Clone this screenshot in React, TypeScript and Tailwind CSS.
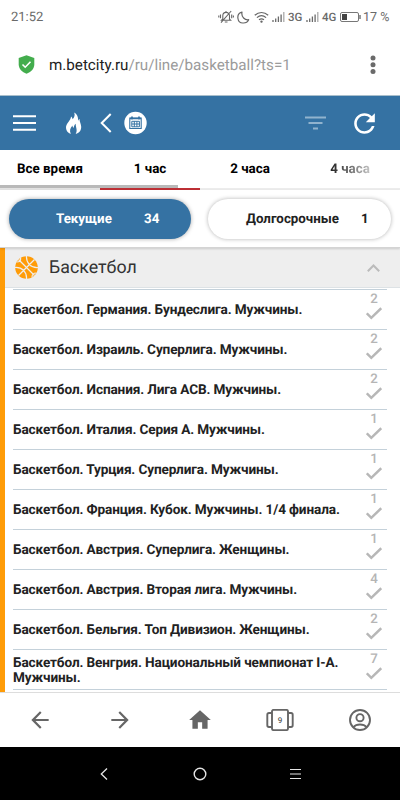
const tabs = [
  { label: "Все время", className: "text-black" },
  { label: "1 час", className: "text-black" },
  { label: "2 часа", className: "text-black" },
  {
    label: "4 часа",
    className: "bg-linear-to-r from-[#222] to-[#c4c4c4] bg-clip-text text-transparent",
  },
];

const leagues = [
  { name: "Баскетбол. Германия. Бундеслига. Мужчины.", count: 2 },
  { name: "Баскетбол. Израиль. Суперлига. Мужчины.", count: 2 },
  { name: "Баскетбол. Испания. Лига АСВ. Мужчины.", count: 2 },
  { name: "Баскетбол. Италия. Серия А. Мужчины.", count: 1 },
  { name: "Баскетбол. Турция. Суперлига. Мужчины.", count: 1 },
  { name: "Баскетбол. Франция. Кубок. Мужчины. 1/4 финала.", count: 1 },
  { name: "Баскетбол. Австрия. Суперлига. Женщины.", count: 1 },
  { name: "Баскетбол. Австрия. Вторая лига. Мужчины.", count: 4 },
  { name: "Баскетбол. Бельгия. Топ Дивизион. Женщины.", count: 2 },
  { name: "Баскетбол. Венгрия. Национальный чемпионат I-A. Мужчины.", count: 7 },
];

function Signal() {
  return (
    <svg className="h-3 w-[13px]" viewBox="0 0 13 12" stroke="#6a6a6a" strokeWidth="1.3">
      <path d="M1 11V9M3.7 11V7.5M6.4 11V5.5M9.1 11V3.5" />
      <path d="M11.8 11V1" stroke="#aaa" />
    </svg>
  );
}

function StatusBar() {
  return (
    <div className="flex h-[34px] items-center pr-[11px] pl-[11px] text-[#6a6a6a]">
      <span className="pt-0.5 text-[13px]">21:52</span>
      <svg className="ml-auto h-[14px] w-4" viewBox="0 0 16 14" fill="none" stroke="#666" strokeWidth="1.1">
        <path d="M3.5 10.3h9.2L11.5 9V5.8C11.5 3.8 10 2.4 8.1 2.4S4.8 3.8 4.8 5.8V9ZM6.8 12h2.7M8 1v1.4M13.2 1 3 12.6M2.5 4.5v3.8M.8 5.5v2M13.7 4.5v3.8M15.4 5.5v2" />
      </svg>
      <svg className="ml-[3px] h-[13px] w-[13px]" viewBox="0 0 13 13" fill="none" stroke="#666" strokeWidth="1.2">
        <path d="M5 1.2C1.8 2 .6 4.7.9 7.2c.4 3 2.7 5 5.5 4.8 2.3-.1 4.4-1.3 5.3-3.3C8 9.3 4 6 5 1.2Z" strokeLinejoin="round" />
      </svg>
      <svg className="ml-1 h-3 w-[15px]" viewBox="0 0 15 12" fill="none" stroke="#666" strokeWidth="1.2">
        <path d="M.8 4.2c4-3.6 9.4-3.6 13.4 0M2.9 6.6c2.8-2.5 6.4-2.5 9.2 0M5 8.8c1.6-1.3 3.4-1.3 5 0" />
        <circle cx="7.5" cy="10.6" r=".6" fill="#666" />
      </svg>
      <span className="ml-[3px] flex"><Signal /></span>
      <span className="ml-[3px] w-[15px] pt-0.5 text-[11.5px] font-medium">3G</span>
      <span className="ml-[3px] flex"><Signal /></span>
      <span className="ml-[3px] w-[15px] pt-0.5 text-[11.5px] font-medium">4G</span>
      <svg className="ml-[3px] h-[10px] w-[22px]" viewBox="0 0 22 10" fill="none" stroke="#777">
        <rect x=".5" y=".5" width="18" height="9" rx="1.5" />
        <path d="M2 2h5v6H2z" fill="#444" stroke="none" />
        <path d="M20 3v4" strokeWidth="1.5" />
      </svg>
      <span className="ml-px w-[26px] pt-0.5 text-[12.5px] whitespace-nowrap">17 %</span>
    </div>
  );
}

function AddressBar() {
  return (
    <div className="flex h-[62px] items-center border-b border-[#a9bfcc] pl-[18px]">
      <svg className="h-[19px] w-[17px]" viewBox="0 0 17 19">
        <path d="M8.5.3 16.3 3v6.2c0 4.6-3.5 8-7.8 9.5C4.2 17.2.7 13.8.7 9.2V3Z" fill="#43ad4d" />
        <path d="m4.5 9.5 2.7 2.7 5.3-5.4" fill="none" stroke="#fff" strokeWidth="1.6" />
      </svg>
      <div className="ml-3.5 pt-0.5 text-[15.2px] whitespace-nowrap text-[#9b9b9b]">
        <span className="text-[#222]">m.betcity.ru</span>/ru/line/basketball?ts=1
      </div>
      <svg className="mr-6 ml-auto h-5 w-[6px]" viewBox="0 0 6 20" fill="#6a6a6a">
        <circle cx="3" cy="3" r="2.5" />
        <circle cx="3" cy="9.7" r="2.5" />
        <circle cx="3" cy="16.4" r="2.5" />
      </svg>
    </div>
  );
}

function Header() {
  return (
    <header className="flex h-[54px] items-center bg-[#3572a3] pl-[13px]">
      <svg className="h-[18px] w-[23px]" viewBox="0 0 23 18" stroke="#fff" strokeWidth="2">
        <path d="M0 2.2h23M0 9h23M0 15.7h23" />
      </svg>
      <svg className="ml-[29px] h-[23px] w-[17px]" viewBox="0 0 17 23" fill="#fff">
        <path d="M9.2.5c1 2.7.3 4.6-1.6 6.8-.3-1.4-.8-2.1-1.6-2.7.2 3.6-5.3 7-5 11.5.2 3.1 2 5 4.8 6-1.5-3.6-.7-6 1.7-8.6 0 1.2.4 1.9 1.2 2.3.2-1.7.8-3 2-4.1-.2 3.7 2.3 6 0 10.4 3.5-1.2 5.6-3.5 5.5-7.3-.1-3-1.8-4.7-1.6-7.7-1 .5-1.5 1.4-1.6 2.7C13.5 6 12.6 2.5 9.2.5Z" />
      </svg>
      <svg className="ml-[18px] h-5 w-3" viewBox="0 0 12 20" fill="none" stroke="#fff" strokeWidth="2">
        <path d="m10.7 1-9 9 9 9" />
      </svg>
      <svg className="ml-[11px] h-6 w-6" viewBox="0 0 24 24" fill="none" stroke="#3572a3">
        <circle cx="12.5" cy="12" r="11.2" fill="#fff" stroke="none" />
        <path d="M6.8 7h11.4v10.5H6.8z" strokeWidth="1.1" />
        <path d="M7 7.5h11M9 5.5v3M16 5.5v3" strokeWidth="1.7" />
        <path d="M8.8 10.3h7.6v5.5H8.8zM8.8 13h7.6M11.3 10.3v5.5M13.9 10.3v5.5" />
      </svg>
      <svg className="ml-auto h-4 w-[21px]" viewBox="0 0 21 16" stroke="#91b3ce" strokeWidth="2">
        <path d="M0 2.5h21M3.5 8h14M8 13.5h5" />
      </svg>
      <svg className="mr-5 ml-[23px] h-[31px] w-[31px]" viewBox="0 0 24 24" fill="#fff">
        <path d="M17.65 6.35C16.2 4.9 14.21 4 12 4c-4.42 0-7.99 3.58-7.99 8s3.57 8 7.99 8c3.73 0 6.84-2.55 7.73-6h-2.08c-.82 2.33-3.04 4-5.65 4-3.31 0-6-2.69-6-6s2.69-6 6-6c1.66 0 3.14.69 4.22 1.78L13 11h7V4l-2.35 2.35z" />
      </svg>
    </header>
  );
}

function Tabs() {
  return (
    <div className="h-10">
      <div className="grid h-[35px] grid-cols-4 items-center pt-1.5 text-center text-[13.4px] font-bold">
        {tabs.map((tab) => (
          <div key={tab.label}>
            <span className={tab.className}>{tab.label}</span>
          </div>
        ))}
      </div>
      <div className="h-[3px] w-[178px] bg-[#b9b9b9]" />
      <div className="flex h-0.5">
        <div className="w-[100px] bg-[#e2e2e2]" />
        <div className="w-[100px] bg-[#bd2f35]" />
        <div className="flex-1 bg-[#ececec]" />
      </div>
    </div>
  );
}

function Filters() {
  return (
    <div className="relative flex h-[58px] gap-[17px] border-b border-[#d4d4d4] pt-[9px] pl-[9px] text-[13.33px] font-bold shadow-[0_1px_2px_rgba(0,0,0,0.15)]">
      <div className="flex h-[40px] w-[182px] items-center rounded-full bg-[#3572a3] pt-0.5 pl-[47px] text-white shadow-[0_0_4px_rgba(0,0,0,0.35)]">
        <span className="w-[88px]">Текущие</span>34
      </div>
      <div className="flex h-[40px] w-[183px] items-center rounded-full bg-white pt-0.5 pl-[38px] text-[#222] shadow-[0_0_4px_rgba(0,0,0,0.3)]">
        <span className="w-[115px]">Долгосрочные</span>1
      </div>
    </div>
  );
}

function Ball() {
  return (
    <svg className="h-[23px] w-[23px]" viewBox="0 0 23 23" fill="none" stroke="#eee" strokeWidth="1.2">
      <circle cx="11.5" cy="11.5" r="11.3" fill="#ff9c08" stroke="none" />
      <path d="m3.5 3.5 16 16M19.5 3.5l-16 16M11.5 0c-.5 7 4.5 12 11.5 11.500M0 11.500c7-.5 12 4.500 11.500 11.500M5.500 1.500C6 5 5 6 1.500 6M21.500 17c-3.500 0-4.500 1-4.500 4.500" />
    </svg>
  );
}

function Leagues() {
  return (
    <main className="h-[444px] overflow-hidden border-l-[5px] border-[#ff9c08]">
      <div className="flex h-10 items-center border-b border-[#dde2e5] bg-[#eee] pl-2.5">
        <Ball />
        <h1 className="mt-0.5 ml-[11px] text-[17.8px] text-[#333]">Баскетбол</h1>
        <svg className="mr-5 ml-auto h-2 w-[13px]" viewBox="0 0 13 8" fill="none" stroke="#bbb" strokeWidth="2">
          <path d="m.8 7.3 5.7-5.8 5.7 5.8" />
        </svg>
      </div>
      <ul className="mr-[13px] ml-2 border-b border-[#c4d1da] pt-px">
        {leagues.map((league) => (
          <li key={league.name} className="flex h-10 border-t border-[#c4d1da]">
            <div className="flex flex-1 items-center pt-0.5 text-[13.6px] leading-[14.5px] font-bold tracking-[-0.13px] text-[#222]">
              {league.name}
            </div>
            <div className="mr-[5px] flex w-4 flex-col items-center text-[13.33px] leading-[14px] font-medium text-[#b5b5b5]">
              <span className="pt-[3px]">{league.count}</span>
              <svg className="h-[13px] w-4" viewBox="0 0 16 13" fill="none" stroke="#b7b7b7" strokeWidth="2.5">
                <path d="m.8 6.3 4.500 4.500L15.200 1.200" />
              </svg>
            </div>
          </li>
        ))}
      </ul>
    </main>
  );
}

function BrowserNav() {
  return (
    <nav className="grid h-[55px] grid-cols-5 place-items-center border-t border-[#ddd] bg-white">
      <svg className="h-[26px] w-[26px]" viewBox="0 0 24 24" fill="#666">
        <path d="M20 11H7.83l5.59-5.59L12 4l-8 8 8 8 1.41-1.41L7.83 13H20v-2z" />
      </svg>
      <svg className="h-[26px] w-[26px]" viewBox="0 0 24 24" fill="#666">
        <path d="m12 4-1.41 1.41L16.17 11H4v2h12.17l-5.58 5.59L12 20l8-8z" />
      </svg>
      <svg className="h-[26px] w-[26px]" viewBox="0 0 24 24" fill="#666">
        <path d="M10 20v-6h4v6h5v-8h3L12 3 2 12h3v8z" />
      </svg>
      <div className="relative flex h-[22px] w-7 items-center justify-center pt-px text-[8px] font-medium text-[#555]">
        <svg className="absolute inset-0 h-[22px] w-7" viewBox="0 0 28 22" fill="none" stroke="#666" strokeWidth="1.9">
          <rect x="6" y=".9" width="16" height="20.2" rx="1.5" />
          <path d="M6 4H3Q1.3 4 1.3 5.700v10.600Q1.300 18 3 18h3M22 4h3q1.700 0 1.700 1.700v10.600q0 1.700-1.700 1.700h-3" />
        </svg>
        <span>9</span>
      </div>
      <svg className="h-[22px] w-[22px]" viewBox="0 0 22 22" fill="none" stroke="#666" strokeWidth="1.9">
        <circle cx="11" cy="11" r="10" />
        <circle cx="11" cy="8.7" r="3.6" />
        <path d="M4.3 18.100c3.200-3.500 10.200-3.500 13.400 0" />
      </svg>
    </nav>
  );
}

function SystemNav() {
  return (
    <div className="flex h-[53px] items-center bg-black pl-[100px]">
      <svg className="h-3 w-2" viewBox="0 0 8 12" fill="none" stroke="#e5e5e5" strokeWidth="1.3">
        <path d="M7 .5 1.3 6 7 11.5" />
      </svg>
      <svg className="ml-[85px] h-[14px] w-[14px]" viewBox="0 0 14 14" fill="none" stroke="#e5e5e5" strokeWidth="1.4">
        <circle cx="7" cy="7" r="5.8" />
      </svg>
      <svg className="ml-[83px] h-3 w-[11px]" viewBox="0 0 11 12" stroke="#e5e5e5" strokeWidth="1.2">
        <path d="M0 1.5h11M0 6h11M0 10.5h11" />
      </svg>
    </div>
  );
}

export default function App() {
  return (
    <div className="h-[800px] w-[400px] overflow-hidden bg-white font-[Roboto,sans-serif] [text-rendering:geometricPrecision]">
      <StatusBar />
      <AddressBar />
      <Header />
      <Tabs />
      <Filters />
      <Leagues />
      <BrowserNav />
      <SystemNav />
    </div>
  );
}
